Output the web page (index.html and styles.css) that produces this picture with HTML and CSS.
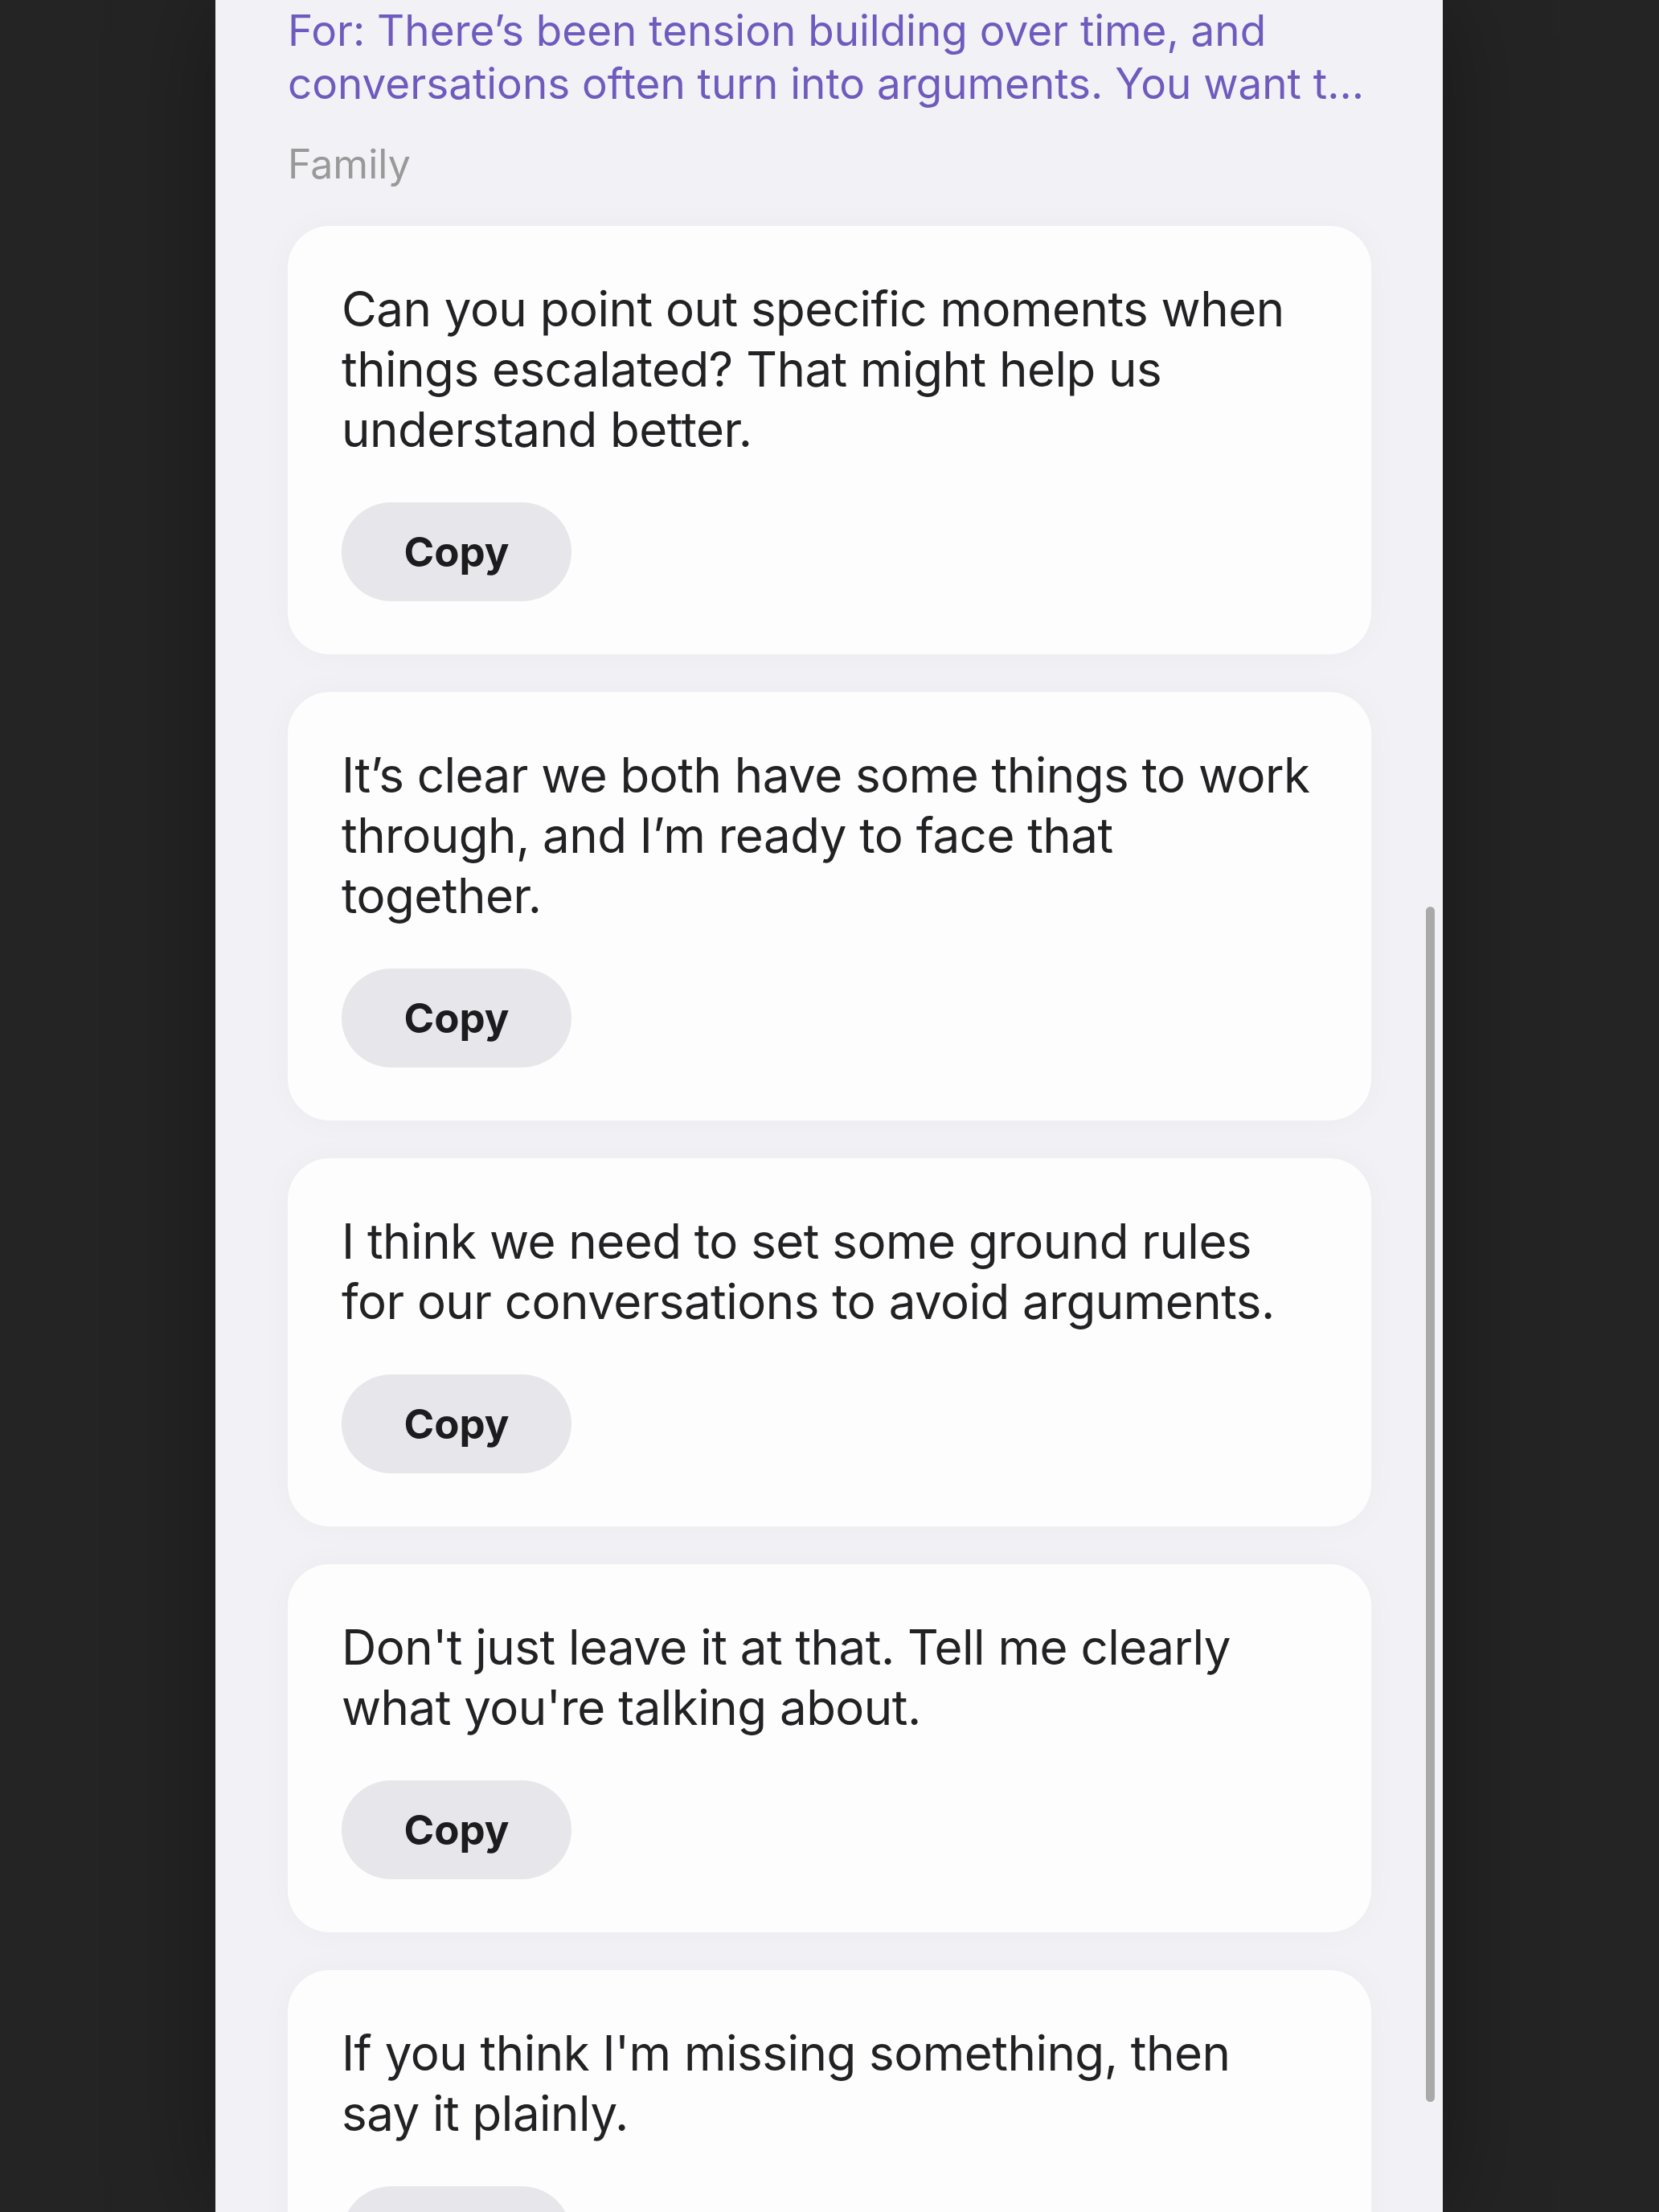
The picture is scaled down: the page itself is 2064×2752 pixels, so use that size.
FILE: index.html
```html
<!DOCTYPE html>
<html>
	<head>
		<meta charset="utf-8">
		<title>Replies</title>
		<link rel="stylesheet" href="styles.css">
	</head>
	<body>
		<div class="sheet">
			<p class="prompt">For: There’s been tension building over time, and conversations often turn into arguments. You want t…</p>
			<p class="tag">Family</p>

			<div class="card">
				<p class="reply">Can you point out specific moments when things escalated? That might help us understand better.</p>
				<button class="copy" type="button">Copy</button>
			</div>

			<div class="card">
				<p class="reply">It’s clear we both have some things to work through, and I’m ready to face that together.</p>
				<button class="copy" type="button">Copy</button>
			</div>

			<div class="card">
				<p class="reply">I think we need to set some ground rules for our conversations to avoid arguments.</p>
				<button class="copy" type="button">Copy</button>
			</div>

			<div class="card">
				<p class="reply">Don't just leave it at that. Tell me clearly what you're talking about.</p>
				<button class="copy" type="button">Copy</button>
			</div>

			<div class="card">
				<p class="reply">If you think I'm missing something, then say it plainly.</p>
				<button class="copy" type="button">Copy</button>
			</div>

			<div class="scrollbar"></div>
		</div>
	</body>
</html>
```

FILE: styles.css
```css
body {
	margin: 0;
	height: 2752px;
	overflow: hidden;
	background-color: #242424;
	font-family: Inter, "Noto Sans", sans-serif;
}

.sheet {
	position: relative;
	box-sizing: border-box;
	width: 1527px;
	height: 2752px;
	margin-left: 268px;
	padding: 5px 80px 0 90px;
	background-color: #f2f1f6;
	box-shadow: 0 0 120px rgba(0, 0, 0, 0.35);
	overflow: hidden;
}

.prompt {
	margin: 0;
	font-size: 53px;
	line-height: 66px;
	color: #6f5bbd;
}

.tag {
	margin: 34px 0 44px;
	font-size: 50px;
	line-height: 66px;
	color: #999999;
}

.card {
	width: 1348px;
	box-sizing: border-box;
	margin-bottom: 47px;
	padding: 66px 67px;
	border-radius: 52px;
	background-color: #fdfdfd;
	box-shadow: 0 0 40px rgba(0, 0, 0, 0.03);
}

.reply {
	margin: 0 0 53px;
	font-size: 60px;
	letter-spacing: -0.5px;
	line-height: 75px;
	color: #222224;
}

.copy {
	display: block;
	width: 286px;
	height: 123px;
	border: none;
	border-radius: 62px;
	background-color: #e6e6eb;
	font-family: Inter, "Noto Sans", sans-serif;
	font-size: 51px;
	font-weight: 700;
	color: #1c1c1e;
}

.scrollbar {
	position: absolute;
	top: 1128px;
	left: 1506px;
	width: 11px;
	height: 1487px;
	border-radius: 6px;
	background-color: #a9a9a9;
}
```
